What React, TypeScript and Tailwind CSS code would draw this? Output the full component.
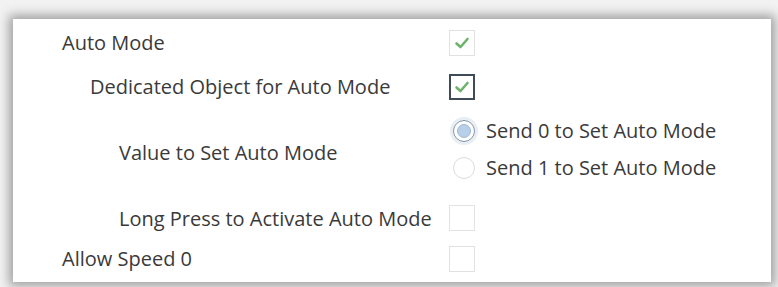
import { useState } from "react";

function Check({ dark = false, checked = false }: { dark?: boolean; checked?: boolean }) {
  return (
    <div
      className={
        "w-[26px] h-[26px] flex items-center justify-center bg-white " +
        (dark ? "border-2 border-[#3f4b57]" : "border border-[#e2e2e2]")
      }
    >
      {checked && (
        <svg width="18" height="18" viewBox="0 0 18 18">
          <path d="M3.5 9.5 L7.5 13 L14.5 5" fill="none" stroke="#6db36b" strokeWidth="2.6" strokeLinecap="round" strokeLinejoin="round" />
        </svg>
      )}
    </div>
  );
}

function Radio({ on, label }: { on: boolean; label: string }) {
  return (
    <div className="h-[26px] flex items-center">
      <div
        className={
          "w-[22px] h-[22px] rounded-full flex items-center justify-center " +
          (on ? "border border-[#7f93a8] shadow-[0_0_0_3px_#e9eef3]" : "border border-[#dcdcdc]")
        }
      >
        {on && <div className="w-[14px] h-[14px] rounded-full bg-[#b7cfe9] border border-[#9fb8d3]" />}
      </div>
      <span className="ml-[11px]">{label}</span>
    </div>
  );
}

export default function App() {
  const [value] = useState(0);

  return (
    <div className="w-[778px] h-[287px] bg-[#f2f2f2] overflow-hidden pt-[19px] pl-[13px] pr-[7px] pb-[5px] font-['Open_Sans',sans-serif] text-[20px] text-[#3a3a3a]">
      <div className="h-full bg-white shadow-[0_0_10px_4px_rgba(0,0,0,0.34)] pl-[49px] pt-[9px]">
        <div className="grid grid-cols-[387px_1fr] items-center h-[26px]">
          <span>Auto Mode</span>
          <Check checked />
        </div>
        <div className="grid grid-cols-[387px_1fr] items-center h-[26px] mt-[18px]">
          <span className="pl-[28px]">Dedicated Object for Auto Mode</span>
          <Check dark checked />
        </div>
        <div className="grid grid-cols-[387px_1fr] items-center mt-[20px]">
          <span className="pl-[57px] mt-[6px]">Value to Set Auto Mode</span>
          <div className="flex flex-col gap-[11px] ml-[4px]">
            <Radio on={value === 0} label="Send 0 to Set Auto Mode" />
            <Radio on={value === 1} label="Send 1 to Set Auto Mode" />
          </div>
        </div>
        <div className="grid grid-cols-[387px_1fr] items-center h-[26px] mt-[20px]">
          <span className="pl-[57px] mt-[3px]">Long Press to Activate Auto Mode</span>
          <Check />
        </div>
        <div className="grid grid-cols-[387px_1fr] items-center h-[26px] mt-[17px]">
          <span>Allow Speed 0</span>
          <Check />
        </div>
      </div>
    </div>
  );
}
